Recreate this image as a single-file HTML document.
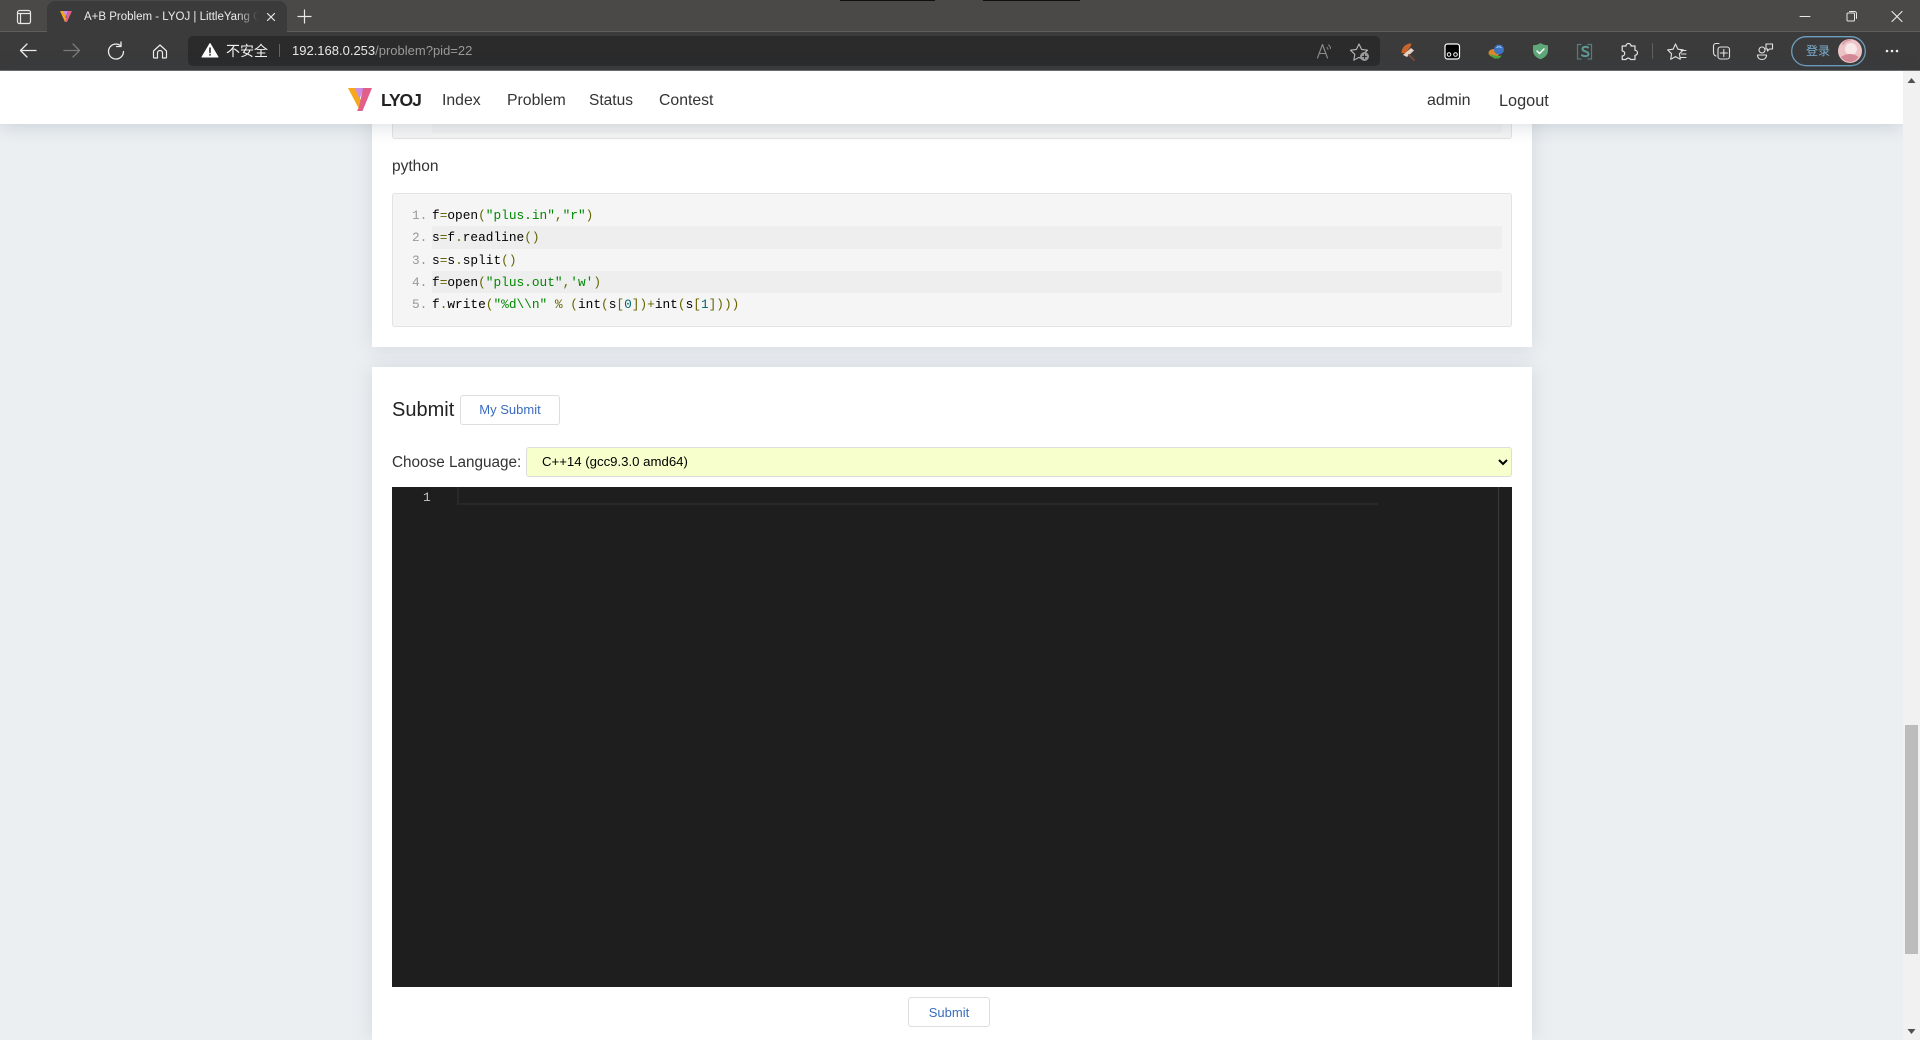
<!DOCTYPE html>
<html lang="en">
<head>
<meta charset="utf-8">
<title>A+B Problem - LYOJ | LittleYang OJ</title>
<style>
html,body{margin:0;padding:0;width:1920px;height:1040px;overflow:hidden;background:#ebeff2;font-family:"Liberation Sans","Noto Sans CJK SC",sans-serif;color:#333}
body{position:relative}
.t{position:absolute;white-space:nowrap}
#titlebar{position:absolute;left:0;top:0;width:1920px;height:32px;background:#4a4948;border-bottom:1px solid #5e5e5d;box-sizing:border-box}
#toolbar{position:absolute;left:0;top:32px;width:1920px;height:38px;background:#3b3b3b}
#tbline{position:absolute;left:0;top:70px;width:1920px;height:1px;background:#707070}
#tab{position:absolute;left:47px;top:1px;width:240px;height:32px;background:#3b3b3b;border-radius:8px 8px 0 0}
#addr{position:absolute;left:188px;top:36px;width:1192px;height:30px;background:#2b2b2b;border-radius:5px}
.blk{position:absolute;top:0;height:1px;background:#111}
#nav{position:absolute;left:0;top:71px;width:1903px;height:53px;background:#fff;box-shadow:0 0 20px rgba(50,70,90,.22);z-index:5}
#sb{position:absolute;left:1903px;top:71px;width:17px;height:969px;background:#f1f1f1;z-index:6}
#thumb{position:absolute;left:1905px;top:725px;width:13px;height:229px;background:#bcbcbc;z-index:7}
.card{position:absolute;left:372px;width:1160px;background:#fff;box-shadow:0 0 20px rgba(60,80,100,.13)}
.code{position:absolute;left:392px;width:1118px;background:#f5f5f5;border:1px solid #e3e3e3;border-radius:3px}
.hl{position:absolute;left:432px;width:1070px;background:#eee}
.ln{position:absolute;font:12.8px/22px "Liberation Mono",monospace;color:#999;left:412px;white-space:pre}
.cl{position:absolute;font:12.8px/22px "Liberation Mono",monospace;color:#000;left:432px;white-space:pre}
.p{color:#660}.s{color:#080}.n{color:#066}
.btn{position:absolute;box-sizing:border-box;height:30px;background:#fff;border:1px solid #ddd;border-radius:3px;color:#3a6cc0;font:13px/28px "Liberation Sans",sans-serif;text-align:center}
select{position:absolute;left:526px;top:447px;width:986px;height:30px;box-sizing:border-box;background:#f7ffcc;border:1px solid #ddd;border-radius:3px;padding:0 0 1px 11px;font:13.2px "Liberation Sans",sans-serif;color:#000;outline:none}
#editor{position:absolute;left:392px;top:487px;width:1120px;height:500px;background:#1e1e1e}
</style>
</head>
<body>
<!-- Page -->
<div class="card" style="top:71px;height:276px"></div>
<div class="code" style="top:71px;height:67px;border-top:none"></div>
<div class="hl" style="top:100px;height:33px;background:#f0f0f0"></div>
<div class="t" style="left:392px;top:157px;font-size:15.500px;line-height:20px;color:#333">python</div>
<div class="code" style="top:193px;height:132px"></div>
<div class="hl" style="top:226px;height:23px"></div>
<div class="hl" style="top:271px;height:22px"></div>
<div class="ln" style="top:205px">1.</div>
<div class="ln" style="top:227px">2.</div>
<div class="ln" style="top:250px">3.</div>
<div class="ln" style="top:272px">4.</div>
<div class="ln" style="top:294px">5.</div>
<div class="cl" style="top:205px">f<span class="p">=</span>open<span class="p">(</span><span class="s">"plus.in"</span><span class="p">,</span><span class="s">"r"</span><span class="p">)</span></div>
<div class="cl" style="top:227px">s<span class="p">=</span>f<span class="p">.</span>readline<span class="p">()</span></div>
<div class="cl" style="top:250px">s<span class="p">=</span>s<span class="p">.</span>split<span class="p">()</span></div>
<div class="cl" style="top:272px">f<span class="p">=</span>open<span class="p">(</span><span class="s">"plus.out"</span><span class="p">,</span><span class="s">'w'</span><span class="p">)</span></div>
<div class="cl" style="top:294px">f<span class="p">.</span>write<span class="p">(</span><span class="s">"%d\\n"</span> <span class="p">%</span> <span class="p">(</span>int<span class="p">(</span>s<span class="p">[</span><span class="n">0</span><span class="p">])+</span>int<span class="p">(</span>s<span class="p">[</span><span class="n">1</span><span class="p">])))</span></div>

<div class="card" style="top:367px;height:673px"></div>
<div class="t" style="left:392px;top:397px;font-size:20px;line-height:26px;color:#222">Submit</div>
<div class="btn" style="left:460px;top:395px;width:100px">My Submit</div>
<div class="t" style="left:392px;top:452px;font-size:15.300px;line-height:22px;color:#333">Choose Language:</div>
<select><option>C++14 (gcc9.3.0 amd64)</option></select>
<div id="editor">
  <div style="position:absolute;left:65px;top:0;width:921px;height:18px;box-sizing:border-box;border:solid #282828;border-width:0 0 2px 2px"></div>
  <div class="t" style="left:31px;top:2px;font:13px/18px 'Liberation Mono',monospace;color:#c6c6c6">1</div>
  <div style="position:absolute;left:1106px;top:0;width:1px;height:500px;background:#3a3a3a"></div>
</div>
<div class="btn" style="left:908px;top:997px;width:82px;line-height:29px">Submit</div>

<!-- Browser chrome -->
<div id="titlebar"></div>
<div class="blk" style="left:840px;width:95px"></div>
<div class="blk" style="left:983px;width:97px"></div>
<div id="toolbar"></div>
<div id="tbline"></div>
<div id="tab"></div>
<div id="addr"></div>

<div class="t" style="left:84px;top:9px;width:174px;overflow:hidden;font-size:11.500px;line-height:16px;color:#ececec;-webkit-mask-image:linear-gradient(90deg,#000 88%,transparent)">A+B Problem - LYOJ | LittleYang OJ</div>
<div class="t" style="left:226px;top:41px;font-size:14px;line-height:20px;color:#f2f2f2;font-family:'Noto Sans CJK SC',sans-serif">不安全</div>
<div class="t" style="left:292px;top:42px;font-size:13px;line-height:18px;color:#e8e8e8">192.168.0.253<span style="color:#9a9a9a">/problem?pid=22</span></div>
<div class="t" style="left:1806px;top:42px;font-size:12px;line-height:18px;color:#7fb2d4;font-family:'Noto Sans CJK SC',sans-serif">登录</div>

<svg style="position:absolute;left:0;top:0" width="1920" height="71" viewBox="0 0 1920 71" fill="none" stroke-linecap="round" stroke-linejoin="round">
 <rect x="17.500" y="10.500" width="13" height="13" rx="2" stroke="#e8e8e8" stroke-width="1.200"/>
 <path d="M18 13.500H30M20.500 13.500V23" stroke="#e8e8e8" stroke-width="1.200"/>
 <path d="M60 11h4l3 11h-2z" fill="#f5a81c"/><path d="M63 11h5l-2 6z" fill="#c98ce8"/><path d="M68 11h4l-5 11h-2z" fill="#e0608a"/>
 <path d="M267.500 13.500l7 7M274.500 13.500l-7 7" stroke="#e8e8e8" stroke-width="1.200"/>
 <path d="M298 16.500h13M304.500 10v13" stroke="#e8e8e8" stroke-width="1.200"/>
 <path d="M36 50.500H21M27 44l-6.500 6.500L27 57" stroke="#ececec" stroke-width="1.300"/>
 <path d="M64 50.500H79M73 44l6.500 6.500L73 57" stroke="#7a7a7a" stroke-width="1.300"/>
 <path d="M120.500 45.500A7.500 7.500 0 1 0 123.500 51.500" stroke="#ececec" stroke-width="1.300"/>
 <path d="M121 42v4.500h-4.500" stroke="#ececec" stroke-width="1.300"/>
 <path d="M153.500 51L160 45l6.500 6v6a1 1 0 0 1-1 1h-3v-5a2.500 2.500 0 0 0-5 0v5h-3a1 1 0 0 1-1-1z" stroke="#ececec" stroke-width="1.200"/>
 <path d="M210 43.500L218 57H202z" fill="#fff" stroke="#fff" stroke-width="1"/>
 <path d="M210 48v4.500M210 54.500v.5" stroke="#2b2b2b" stroke-width="1.600"/>
 <path d="M279.500 44.500v12" stroke="#666" stroke-width="1"/>
 <path d="M1317.500 58L1322.500 44.500 1327.500 58M1319.500 53.500h6" stroke="#8e8e8e" stroke-width="1.100"/>
 <path d="M1328.500 45c1.500 1 2 2.200 2 3.500M1327 47.500c.6.500 1 1 1 1.800" stroke="#8e8e8e" stroke-width="1"/>
 <path d="M1359 44l2.600 5.400 5.900.8-4.300 4.100 1 5.900-5.200-2.800-5.200 2.800 1-5.900-4.300-4.100 5.900-.8z" stroke="#b8b8b8" stroke-width="1.100"/>
 <circle cx="1364.500" cy="56.500" r="4.500" fill="#9a9a9a"/>
 <path d="M1362.500 56.500h4M1364.500 54.500v4" stroke="#2b2b2b" stroke-width="1.100"/>
 <path d="M1401.500 53c0-6 5-10 10-9.500l-1 3-5 7z" fill="#c8642c"/>
 <path d="M1403 55l8-7 3 2.500-7 6.500z" fill="#e8d4c4"/>
 <path d="M1409 55l5 5" stroke="#7a4a3a" stroke-width="2"/>
 <rect x="1445" y="44" width="14.500" height="15" rx="2.500" fill="#000" stroke="#fff" stroke-width="1.200"/>
 <circle cx="1449" cy="54.500" r="1.800" stroke="#fff" stroke-width="1"/><circle cx="1455.500" cy="54.500" r="1.800" stroke="#fff" stroke-width="1"/>
 <ellipse cx="1494" cy="53" rx="5.500" ry="4" fill="#d9892a"/>
 <circle cx="1499" cy="49.500" r="5" fill="#3f74c4"/>
 <path d="M1497 47.500a3 3 0 0 1 4 0" stroke="#bcd6f2" stroke-width="1"/>
 <path d="M1489 54l5 4.500h5l3-3-5 .5z" fill="#4ea83c"/>
 <path d="M1540.500 43c2 1.500 4.500 2.200 7.500 2.200v5c0 4.500-3 7.500-7.500 9-4.500-1.500-7.500-4.500-7.500-9v-5c3 0 5.500-.7 7.500-2.200z" fill="#5fa87a"/>
 <path d="M1537 51l2.500 2.500 4.500-4.500" stroke="#fff" stroke-width="1.500"/>
 <path d="M1581 44.500h-3.500v14.500h3.500M1588 44.500h3.500v14.500h-3.500" stroke="#4f8080" stroke-width="1.200"/>
 <path d="M1588 47.500c-1-1-5.500-1.200-5.500 1.500 0 3 6 1.800 6 5 0 2.700-5 2.500-6.500 1.200" stroke="#5f9a98" stroke-width="2"/>
 <path d="M1626 46a2.500 2.500 0 0 1 5 0h4v4.300a2.500 2.500 0 0 1 0 5V59.500h-4.500a2.500 2.500 0 0 0-4.500 0h-3.800v-3.500a2.500 2.500 0 0 0 0-5V46z" stroke="#e4e4e4" stroke-width="1.200"/>
 <path d="M1652.500 43.500v15" stroke="#606060" stroke-width="1"/>
 <path d="M1675.500 44l2.400 5.200 5.500.7-4 3.900.9 5.500-4.800-2.700-4.800 2.700.9-5.500-4-3.900 5.500-.7z" stroke="#e4e4e4" stroke-width="1.100"/>
 <path d="M1681 50.500h5M1681.500 54h4.500M1680.500 57.500h5.500" stroke="#e4e4e4" stroke-width="1"/>
 <path d="M1719 43.500h-3a2.500 2.500 0 0 0-2.500 2.500v6c0 2 .7 3.500 2.500 4" stroke="#e4e4e4" stroke-width="1.100"/>
 <rect x="1718" y="47" width="11.500" height="12" rx="2.500" stroke="#e4e4e4" stroke-width="1.100"/>
 <path d="M1723.800 49.500v7M1720.300 53h7" stroke="#e4e4e4" stroke-width="1.100"/>
 <circle cx="1762" cy="50" r="3" stroke="#e4e4e4" stroke-width="1.100"/>
 <path d="M1757.500 55h9c0 3-2 4.500-4.500 4.500s-4.500-1.500-4.500-4.500z" stroke="#e4e4e4" stroke-width="1.100"/>
 <path d="M1766 44h6.500v5h-3l-2 2v-2h-1.500z" stroke="#e4e4e4" stroke-width="1.100"/>
 <rect x="1791.700" y="36.700" width="73.600" height="29" rx="14.500" stroke="#6f9fbf" stroke-width="1.300"/>
 <circle cx="1850" cy="51" r="12" fill="#edc4c8"/>
 <circle cx="1851" cy="49" r="6" fill="#f8e8e8"/>
 <path d="M1841 57c2 3 6 5 9 5s6-1.500 8.500-5c-3-2-5-3-8.500-3s-6 1-9 3z" fill="#d88a98"/>
 <path d="M1843 44c2-3 4-4 7-4" stroke="#d9a0a8" stroke-width="2"/>
 <circle cx="1887" cy="51" r="1.300" fill="#ececec"/><circle cx="1892" cy="51" r="1.300" fill="#ececec"/><circle cx="1897" cy="51" r="1.300" fill="#ececec"/>
 <path d="M1800 16.500h10" stroke="#e8e8e8" stroke-width="1"/>
 <rect x="1847" y="13" width="7.500" height="8" rx="1" stroke="#e8e8e8" stroke-width="1"/>
 <path d="M1849.500 11.500h5a2 2 0 0 1 2 2v5" stroke="#e8e8e8" stroke-width="1"/>
 <path d="M1892 11.500l10 10M1902 11.500l-10 10" stroke="#ececec" stroke-width="1.100"/>
</svg>

<!-- Navbar -->
<div id="nav"></div>
<svg style="position:absolute;left:348px;top:88px;z-index:6" width="24" height="23" viewBox="0 0 24 23">
 <path d="M0 0h7l7 15-3 6z" fill="#f5a81c"/>
 <path d="M7 0h9l-4.500 11z" fill="#c98ce8"/>
 <path d="M15 0h9L14.500 23h-5.500l2-4z" fill="#e0608a"/>
</svg>
<div class="t" style="z-index:6;left:381px;top:87px;font-size:17.500px;line-height:26px;font-weight:700;color:#222;letter-spacing:-1.100px">LYOJ</div>
<div class="t" style="z-index:6;left:442px;top:89px;font-size:15.800px;line-height:24px">Index</div>
<div class="t" style="z-index:6;left:507px;top:89px;font-size:15.800px;line-height:24px">Problem</div>
<div class="t" style="z-index:6;left:589px;top:89px;font-size:15.500px;line-height:24px">Status</div>
<div class="t" style="z-index:6;left:659px;top:89px;font-size:15.800px;line-height:24px">Contest</div>
<div class="t" style="z-index:6;left:1427px;top:89px;font-size:16px;line-height:24px">admin</div>
<div class="t" style="z-index:6;left:1499px;top:89px;font-size:16.300px;line-height:24px">Logout</div>

<!-- Scrollbar -->
<div id="sb"></div>
<div id="thumb"></div>
<svg style="position:absolute;left:1903px;top:71px;z-index:8" width="17" height="969" viewBox="0 0 17 969">
 <path d="M8.500 7L12.500 12H4.500z" fill="#505050"/>
 <path d="M4.500 958H12.500L8.500 963z" fill="#505050"/>
</svg>
</body>
</html>
